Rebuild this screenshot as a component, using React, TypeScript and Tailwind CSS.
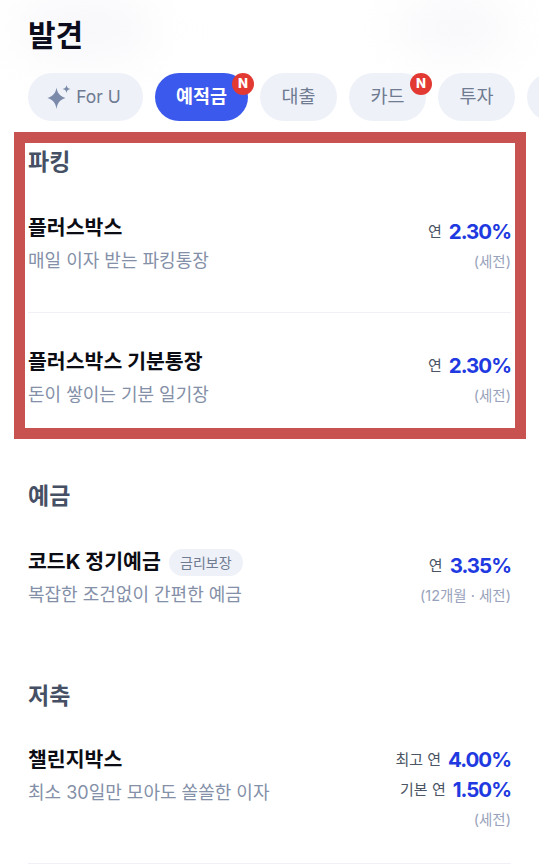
const font = { fontFamily: '"Inter", "Noto Sans CJK KR", sans-serif' };

const Sparkle = () => (
  <svg width="24" height="24" viewBox="0 0 24 24" className="shrink-0" fill="#7b8aa8">
    <path d="M9.5 2.5 C10.4 8 12.6 11 18.5 13 C12.6 15 10.4 18 9.5 24 C8.6 18 6.4 15 0.5 13 C6.4 11 8.6 8 9.5 2.5 Z" />
    <path d="M19.5 0 C19.9 2.4 20.8 3.3 23.5 4 C20.8 4.7 19.9 5.6 19.5 8 C19.1 5.6 18.2 4.7 15.5 4 C18.2 3.3 19.1 2.4 19.5 0 Z" />
  </svg>
);

const Badge = () => (
  <span className="absolute right-[-6px] top-0 flex h-[22px] w-[22px] items-center justify-center rounded-full bg-[#e23a33] text-[13px] font-extrabold text-white">
    N
  </span>
);

const Chip = ({ label, width, active, badge }: { label: string; width: string; active?: boolean; badge?: boolean }) => (
  <div
    className={`relative flex h-12 shrink-0 items-center justify-center rounded-full text-[18.5px] ${width} ${
      active ? 'bg-[#3b59ec] font-bold text-white' : 'bg-[#eef1f8] text-[#6f7b91]'
    }`}
  >
    {label}
    {badge && <Badge />}
  </div>
);

const Rate = ({ label, value }: { label: string; value: string }) => (
  <div className="flex h-[30px] items-center justify-end gap-[7px]">
    <span className="text-[15px] text-[#4b5563]">{label}</span>
    <span className="text-[20.5px] font-bold tracking-[-1px] text-[#2039e0]">{value}</span>
  </div>
);

const Row = ({
  name,
  desc,
  note,
  rates,
  tag,
  tall,
}: {
  name: string;
  desc: string;
  note: string;
  rates: { label: string; value: string }[];
  tag?: string;
  tall?: boolean;
}) => (
  <div className="flex items-start justify-between">
    <div>
      <div className="flex h-8 items-center gap-2">
        <span className="text-[20.5px] font-bold text-[#0c0c14]">{name}</span>
        {tag && (
          <span className="flex h-[27px] w-[74px] items-center justify-center rounded-full bg-[#eef1f8] text-[14px] text-[#6f7b91]">
            {tag}
          </span>
        )}
      </div>
      <div className="flex h-8 items-center text-[18px] text-[#8490a8]">{desc}</div>
    </div>
    <div className={tall ? 'pt-px' : 'pt-[5px]'}>
      {rates.map((r) => (
        <Rate key={r.label} label={r.label} value={r.value} />
      ))}
      <div className="flex h-[29px] items-center justify-end text-[14.5px] text-[#98a2bb]">{note}</div>
    </div>
  </div>
);

const Heading = ({ children }: { children: string }) => (
  <h2 className="flex h-[30px] items-center text-[23px] font-bold text-[#465064]">{children}</h2>
);

export default function App() {
  return (
    <div className="relative h-[866px] w-[539px] overflow-hidden bg-white" style={font}>
      {/* faint blurred patches behind the title */}
      <div className="absolute left-[20px] top-[4px] h-[50px] w-[130px] rounded-full bg-[#f6f6fa] blur-xl" />
      <div className="absolute right-[30px] top-[6px] h-[44px] w-[110px] rounded-full bg-[#f6f6fa] blur-xl" />

      <div className="relative flex h-[73px] items-start px-7 pt-[12px]">
        <h1 className="text-[30px] font-bold leading-[46px] text-[#0c0c1c]">발견</h1>
      </div>

      <div className="relative flex gap-3 overflow-hidden pl-7">
        <div className="flex h-12 w-[115px] shrink-0 items-center justify-center gap-[5px] rounded-full bg-[#eef1f8] pr-[3px] text-[17.5px] text-[#6f7b91]">
          <Sparkle />
          For U
        </div>
        <Chip label="예적금" width="w-[93px]" active badge />
        <Chip label="대출" width="w-[77px]" />
        <Chip label="카드" width="w-[77px]" badge />
        <Chip label="투자" width="w-[77px]" />
        <Chip label="" width="w-[60px]" />
      </div>

      <main className="px-7 pt-[26px]">
        <Heading>파킹</Heading>
        <div className="mt-[35px]">
          <Row name="플러스박스" desc="매일 이자 받는 파킹통장" note="(세전)" rates={[{ label: '연', value: '2.30%' }]} />
        </div>
        <div className="mb-[33px] mt-[36px] h-px bg-[#f0f1f6]" />
        <Row name="플러스박스 기분통장" desc="돈이 쌓이는 기분 일기장" note="(세전)" rates={[{ label: '연', value: '2.30%' }]} />

        <div className="mt-[71px]">
          <Heading>예금</Heading>
        </div>
        <div className="mt-[35px]">
          <Row
            name="코드K 정기예금"
            tag="금리보장"
            desc="복잡한 조건없이 간편한 예금"
            note="(12개월 · 세전)"
            rates={[{ label: '연', value: '3.35%' }]}
          />
        </div>

        <div className="mt-[71px]">
          <Heading>저축</Heading>
        </div>
        <div className="mt-[33px]">
          <Row
            tall
            name="챌린지박스"
            desc="최소 30일만 모아도 쏠쏠한 이자"
            note="(세전)"
            rates={[
              { label: '최고 연', value: '4.00%' },
              { label: '기본 연', value: '1.50%' },
            ]}
          />
        </div>
        <div className="mt-[29px] h-px bg-[#f0f1f6]" />
      </main>

      {/* red highlight frame drawn over the screenshot */}
      <div className="pointer-events-none absolute left-[14px] top-[132px] h-[307px] w-[512px] border-[11px] border-[#c85250]" />
    </div>
  );
}
